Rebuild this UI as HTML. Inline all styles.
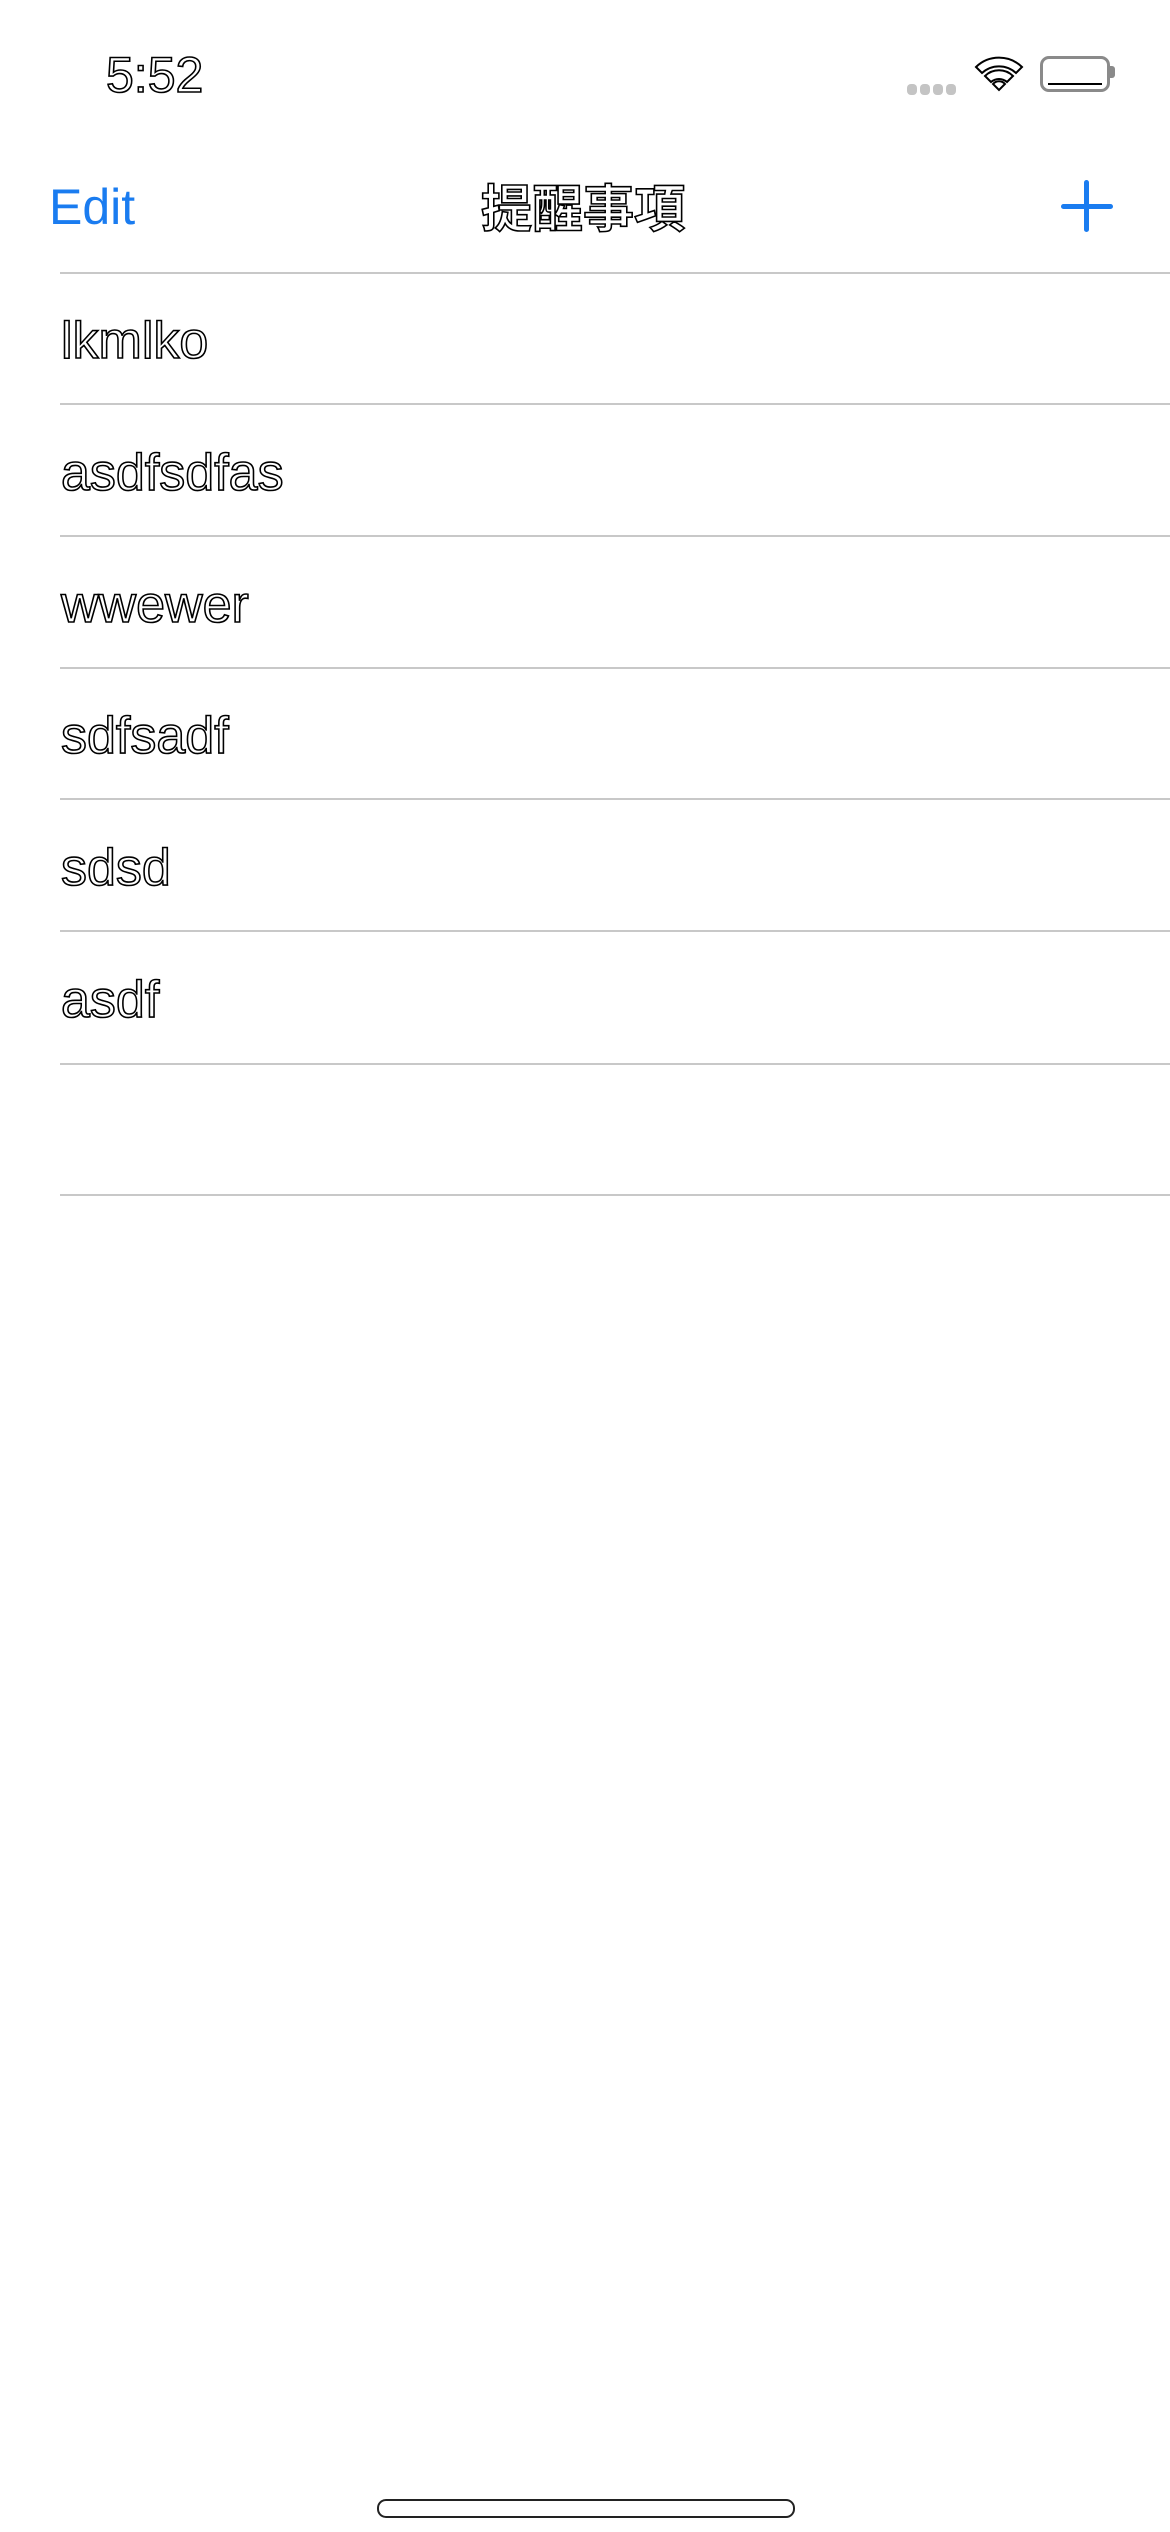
<!DOCTYPE html>
<html><head><meta charset="utf-8"><style>
html,body{margin:0;padding:0;background:#fff;}
body{width:1170px;height:2532px;position:relative;overflow:hidden;font-family:"Liberation Sans","Noto Sans CJK TC",sans-serif;}
.o{color:#fff;-webkit-text-stroke:1.6px #000;}
.abs{position:absolute;white-space:nowrap;}
.sep{position:absolute;left:60px;right:0;height:2px;background:#c8c8c8;}
.row{position:absolute;left:61px;font-size:52px;line-height:1;}
</style></head><body>
<div class="abs o" style="left:106px;top:50px;font-size:50px;line-height:1;">5:52</div>
<div class="abs" style="left:907px;top:82px;">
<span style="display:inline-block;width:10px;height:11px;border-radius:4px;background:#c4c4c4;margin-right:3px"></span><span style="display:inline-block;width:10px;height:11px;border-radius:4px;background:#c4c4c4;margin-right:3px"></span><span style="display:inline-block;width:10px;height:11px;border-radius:4px;background:#c4c4c4;margin-right:3px"></span><span style="display:inline-block;width:10px;height:11px;border-radius:4px;background:#c4c4c4"></span></div>
<svg class="abs" style="left:973px;top:54px" width="52" height="38" viewBox="0 0 52 38">
<path d="M3 13 A33 33 0 0 1 49 13 L43 19 A25 25 0 0 0 9 19 Z" fill="#fff" stroke="#000" stroke-width="2"/>
<path d="M12 22 A20 20 0 0 1 40 22 L34 28 A12 12 0 0 0 18 28 Z" fill="#fff" stroke="#000" stroke-width="2"/>
<path d="M20 30 A8 8 0 0 1 32 30 L26 36 Z" fill="#fff" stroke="#000" stroke-width="2"/>
</svg>
<div class="abs" style="left:1040px;top:56px;width:64px;height:30px;border:3px solid #8a8a8a;border-radius:9px;"><div style="position:absolute;left:5px;right:5px;bottom:4px;height:2px;background:#000"></div></div>
<div class="abs" style="left:1110px;top:66px;width:5px;height:12px;background:#8a8a8a;border-radius:0 3px 3px 0"></div>

<div class="abs" style="left:49px;top:180px;font-size:50px;line-height:1.1;color:#1a7cf0;">Edit</div>
<div class="abs o" style="left:481px;top:180px;font-size:51px;line-height:1;font-weight:bold;font-family:'Noto Sans CJK TC',sans-serif;">提醒事項</div>
<div class="abs" style="left:1084px;top:180px;width:5px;height:52px;background:#1a7cf0;border-radius:3px"></div>
<div class="abs" style="left:1061px;top:204px;width:52px;height:5px;background:#1a7cf0;border-radius:3px"></div>

<div class="sep" style="top:272px"></div>
<div class="row o" style="top:315px">lkmlko</div>
<div class="sep" style="top:403px"></div>
<div class="row o" style="top:447px">asdfsdfas</div>
<div class="sep" style="top:535px"></div>
<div class="row o" style="top:579px">wwewer</div>
<div class="sep" style="top:667px"></div>
<div class="row o" style="top:710px">sdfsadf</div>
<div class="sep" style="top:798px"></div>
<div class="row o" style="top:842px">sdsd</div>
<div class="sep" style="top:930px"></div>
<div class="row o" style="top:974px">asdf</div>
<div class="sep" style="top:1063px"></div>
<div class="sep" style="top:1194px"></div>

<div class="abs" style="left:377px;top:2499px;width:414px;height:15px;border:2px solid #222;border-radius:9px;"></div>
</body></html>
